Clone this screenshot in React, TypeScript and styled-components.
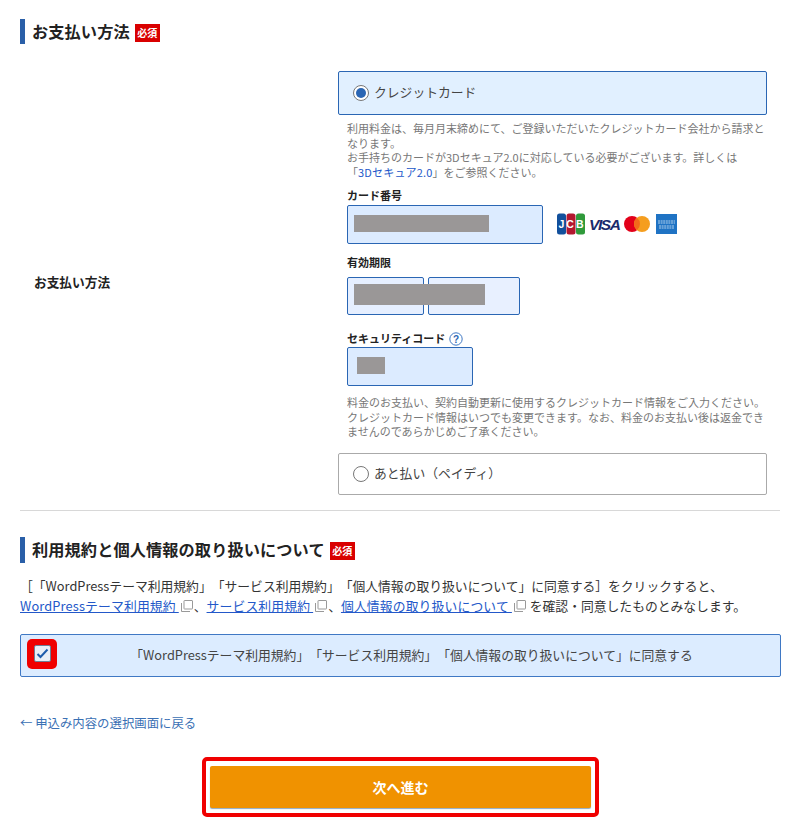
import React from "react";
import styled, { createGlobalStyle } from "styled-components";

const GlobalStyle = createGlobalStyle`
  html, body { margin: 0; padding: 0; background: #fff; }
  body {
    font-family: "Noto Sans CJK JP", "Noto Sans", sans-serif;
    color: #333;
    height: 832px;
    overflow: hidden;
    text-spacing-trim: space-all;
  }
`;

const Page = styled.div`
  width: 800px;
  padding: 19px 19px 0 20px;
  box-sizing: border-box;
`;

const Heading = styled.h2`
  display: flex;
  align-items: center;
  height: 25px;
  margin: 0;
  padding-left: 7px;
  border-left: 5px solid #2a5fa8;
  font-size: 16.2px;
  line-height: 25px;
  font-weight: 700;
  color: #222;
  letter-spacing: 0.1px;
`;

const Required = styled.span`
  display: inline-flex;
  align-items: center;
  justify-content: center;
  width: 25px;
  height: 18px;
  margin: 3px 0 0 5px;
  background: #d90000;
  color: #fff;
  font-size: 10px;
  font-weight: 700;
  line-height: 1;
  letter-spacing: 0;
`;

const PaymentRow = styled.div`
  display: flex;
  margin-top: 27px;
`;

const RowLabel = styled.div`
  width: 318px;
  box-sizing: border-box;
  padding: 0 0 2px 14px;
  display: flex;
  align-items: center;
  font-size: 12.7px;
  font-weight: 700;
  color: #222;
`;

const RowBody = styled.div`
  width: 429px;
`;

const Option = styled.div<{ $active?: boolean }>`
  display: flex;
  align-items: center;
  gap: 5px;
  box-sizing: border-box;
  height: ${(p) => (p.$active ? 44 : 42)}px;
  margin-top: ${(p) => (p.$active ? 0 : 14)}px;
  padding: 0 0 3px 14px;
  border: 1px solid ${(p) => (p.$active ? "#2a66b4" : "#aaa")};
  border-radius: 2px;
  background: ${(p) => (p.$active ? "#e1f0ff" : "#fff")};
  font-size: 12.8px;
  color: #444;
`;

const Radio = styled.span<{ $on?: boolean }>`
  position: relative;
  width: 16px;
  height: 16px;
  margin-top: 3px;
  box-sizing: border-box;
  border: 1px solid #777;
  border-radius: 50%;
  background: #fff;
  &::after {
    content: "";
    display: ${(p) => (p.$on ? "block" : "none")};
    position: absolute;
    left: 2px;
    top: 2px;
    width: 10px;
    height: 10px;
    border-radius: 50%;
    background: #2a66b4;
  }
`;

const CardFields = styled.div`
  padding-left: 9px;
`;

const Help = styled.p<{ $top: number }>`
  margin: ${(p) => p.$top}px 0 0;
  font-size: 11px;
  line-height: 14.7px;
  color: #777;
`;

const InlineLink = styled.a`
  color: #2358c9;
  letter-spacing: 0.2px;
`;

const FieldLabel = styled.div<{ $top: number }>`
  display: flex;
  align-items: center;
  gap: 4px;
  height: 16px;
  box-sizing: border-box;
  padding-bottom: 2px;
  margin-top: ${(p) => p.$top}px;
  font-size: 11px;
  line-height: 14px;
  font-weight: 700;
  color: #222;
`;

const HintIcon = styled.svg`
  display: block;
  margin-top: 2px;
`;

const FieldRow = styled.div<{ $top: number }>`
  position: relative;
  display: flex;
  align-items: center;
  margin-top: ${(p) => p.$top}px;
`;

const Input = styled.div<{ $w: number; $h: number; $bg?: string; $gap?: number }>`
  width: ${(p) => p.$w}px;
  height: ${(p) => p.$h}px;
  margin-right: ${(p) => p.$gap ?? 0}px;
  box-sizing: border-box;
  border: 1px solid #2a66b4;
  border-radius: 2px;
  background: ${(p) => p.$bg ?? "#dcebff"};
`;

const Mask = styled.div<{ $l: number; $t: number; $w: number; $h: number }>`
  position: absolute;
  left: ${(p) => p.$l}px;
  top: ${(p) => p.$t}px;
  width: ${(p) => p.$w}px;
  height: ${(p) => p.$h}px;
  background: #9a9797;
`;

const CardLogos = styled.svg`
  display: block;
  margin-left: 14px;
`;

const Divider = styled.hr`
  margin: 15px 0 0;
  border: 0;
  border-top: 1px solid #d8d8d8;
  width: 760px;
`;

const SecondHeading = styled(Heading)`
  height: 26px;
  margin-top: 26px;
`;

const Terms = styled.p`
  margin: 13px 0 0;
  font-size: 12.8px;
  line-height: 20px;
  color: #333;
`;

const TermsLink = styled.a`
  color: #2358c9;
  text-decoration: underline;
  letter-spacing: 0.15px;
`;

const ExternalIcon = styled.svg`
  display: inline-block;
  width: 12px;
  height: 12px;
  margin: 0 1px 0 2px;
  vertical-align: -1px;
`;

const AgreeBox = styled.div`
  position: relative;
  display: flex;
  align-items: center;
  justify-content: center;
  box-sizing: border-box;
  width: 761px;
  height: 43px;
  margin-top: 18px;
  padding: 0 0 2px 22px;
  border: 1px solid #3f78c4;
  border-radius: 2px;
  background: #dcecff;
  font-size: 12.8px;
  color: #444;
`;

const CheckHighlight = styled.span`
  position: absolute;
  left: 6px;
  top: 4px;
  width: 30px;
  height: 30px;
  border-radius: 5px;
  background: #f00000;
  display: flex;
  align-items: center;
  justify-content: center;
`;

const CheckBox = styled.span`
  width: 17px;
  height: 17px;
  box-sizing: border-box;
  border: 1px solid #6f7f96;
  border-radius: 2px;
  background: #e9eef6;
  display: flex;
  align-items: center;
  justify-content: center;
`;

const BackLink = styled.a`
  display: block;
  margin-top: 37px;
  font-size: 12.4px;
  line-height: 18px;
  color: #3a70b4;
`;

const ButtonFrame = styled.div`
  display: flex;
  box-sizing: border-box;
  width: 397px;
  height: 60px;
  margin: 25px 0 0 182px;
  padding: 5px 4px;
  border: 4px solid #f00000;
  border-radius: 5px;
  background: #fff;
`;

const NextButton = styled.button`
  flex: 1;
  border: 0;
  border-radius: 2px;
  background: #f09200;
  box-shadow: 0 1px 1px #8fa9c4;
  color: #fff;
  font-family: inherit;
  font-size: 14px;
  font-weight: 700;
`;

const External = () => (
  <ExternalIcon viewBox="0 0 12 12" fill="none" stroke="#999" strokeWidth="1">
    <rect x="3" y="0.5" width="8.5" height="8.5" rx="0.5" />
    <path d="M0.5 3v8.5H9" />
  </ExternalIcon>
);

const App = () => {
  return (
    <Page>
      <GlobalStyle />
      <Heading>
        お支払い方法<Required>必須</Required>
      </Heading>

      <PaymentRow>
        <RowLabel>お支払い方法</RowLabel>
        <RowBody>
          <Option $active>
            <Radio $on />
            クレジットカード
          </Option>
          <CardFields>
            <Help $top={6}>
              利用料金は、毎月月末締めにて、ご登録いただいたクレジットカード会社から請求となります。
              <br />
              お手持ちのカードが3Dセキュア2.0に対応している必要がございます。詳しくは
              <br />「<InlineLink>3Dセキュア2.0</InlineLink>」をご参照ください。
            </Help>
            <FieldLabel $top={8}>カード番号</FieldLabel>
            <FieldRow $top={1}>
              <Input $w={196} $h={39} />
              <Mask $l={7} $t={10} $w={135} $h={17} />
              <CardLogos width="120" height="22" viewBox="0 0 120 22">
                <rect x="0" y="0.5" width="9" height="21" rx="2.5" fill="#12509c" />
                <rect x="9.5" y="0.5" width="9" height="21" rx="2.5" fill="#b3172f" />
                <rect x="19" y="0.5" width="9" height="21" rx="2.5" fill="#2f9a3b" />
                <text x="1.5" y="15" fontFamily="Liberation Sans" fontSize="10.5" fontWeight="700" fill="#fff" textLength="25">
                  JCB
                </text>
                <text x="32" y="17" fontFamily="Liberation Sans" fontSize="15.5" fontWeight="700" fontStyle="italic" fill="#1a2a6c" textLength="32">
                  VISA
                </text>
                <circle cx="75" cy="11" r="8" fill="#e2001a" />
                <circle cx="85" cy="11" r="8" fill="#f59e1f" />
                <path d="M80 4.8a8 8 0 0 1 0 12.4a8 8 0 0 1 0-12.4z" fill="#f26a1b" />
                <rect x="99" y="1" width="21" height="20" fill="#1f73c4" />
                <path d="M101 8h17M101 10h17M102 13h15M102 15h15" stroke="#d6e8f8" strokeWidth="0.8" strokeDasharray="2 0.6" />
              </CardLogos>
            </FieldRow>

            <FieldLabel $top={11}>有効期限</FieldLabel>
            <FieldRow $top={6}>
              <Input $w={77} $h={38} $bg="#e6efff" $gap={4} />
              <Input $w={92} $h={38} $bg="#e8f0ff" />
              <Mask $l={7} $t={7} $w={131} $h={21} />
            </FieldRow>

            <FieldLabel $top={16}>
              セキュリティコード
              <HintIcon width="14" height="14" viewBox="0 0 14 14">
                <circle cx="7" cy="7" r="6.2" fill="#fff" stroke="#3f78c4" strokeWidth="1" />
                <text x="7" y="10.5" textAnchor="middle" fontFamily="Liberation Sans" fontSize="10" fontWeight="700" fill="#2a66b4">
                  ?
                </text>
              </HintIcon>
            </FieldLabel>
            <FieldRow $top={0}>
              <Input $w={126} $h={39} />
              <Mask $l={10} $t={10} $w={28} $h={17} />
            </FieldRow>
            <Help $top={9}>
              料金のお支払い、契約自動更新に使用するクレジットカード情報をご入力ください。
              <br />
              クレジットカード情報はいつでも変更できます。なお、料金のお支払い後は返金できませんのであらかじめご了承ください。
            </Help>
          </CardFields>
          <Option>
            <Radio />
            あと払い（ペイディ）
          </Option>
        </RowBody>
      </PaymentRow>

      <Divider />

      <SecondHeading>
        利用規約と個人情報の取り扱いについて<Required>必須</Required>
      </SecondHeading>

      <Terms>
        ［「WordPressテーマ利用規約」「サービス利用規約」「個人情報の取り扱いについて」に同意する］をクリックすると、
        <br />
        <TermsLink>WordPressテーマ利用規約 </TermsLink>
        <External />、<TermsLink>サービス利用規約 </TermsLink>
        <External />、<TermsLink>個人情報の取り扱いについて </TermsLink>
        <External /> を確認・同意したものとみなします。
      </Terms>

      <AgreeBox>
        <CheckHighlight>
          <CheckBox>
            <svg width="13" height="11" viewBox="0 0 13 11">
              <path d="M1.5 6l3 3L11.5 1.5" fill="none" stroke="#1f5cab" strokeWidth="2" />
            </svg>
          </CheckBox>
        </CheckHighlight>
        「WordPressテーマ利用規約」「サービス利用規約」「個人情報の取り扱いについて」に同意する
      </AgreeBox>

      <BackLink>← 申込み内容の選択画面に戻る</BackLink>

      <ButtonFrame>
        <NextButton>次へ進む</NextButton>
      </ButtonFrame>
    </Page>
  );
};

export default App;
